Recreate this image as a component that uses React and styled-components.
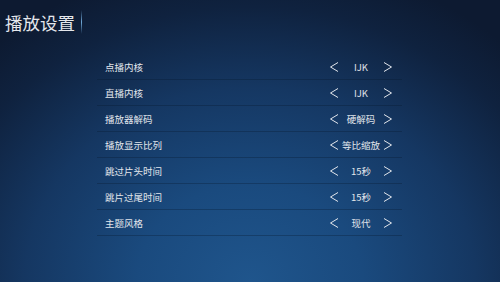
import React from 'react';
import styled, { createGlobalStyle } from 'styled-components';

const GlobalStyle = createGlobalStyle`
    html, body {
        margin: 0;
        padding: 0;
    }
    body {
        font-family: "Noto Sans CJK SC", "Roboto", sans-serif;
    }
`;

const settings = [
    { label: '点播内核', value: 'IJK' },
    { label: '直播内核', value: 'IJK' },
    { label: '播放器解码', value: '硬解码' },
    { label: '播放显示比列', value: '等比缩放' },
    { label: '跳过片头时间', value: '15秒' },
    { label: '跳片过尾时间', value: '15秒' },
    { label: '主题风格', value: '现代' },
];

const Arrow = ({ dir }) => (
    <ArrowIcon width="10" height="12" viewBox="0 0 10 12">
        {dir === 'left'
            ? <polyline points="9,1.5 1.5,6 9,10.5" />
            : <polyline points="1,1.5 8.5,6 1,10.5" />}
    </ArrowIcon>
);

const App = () => (
    <>
        <GlobalStyle />
        <Page>
            <Header>
                <Title>播放设置</Title>
                <Cursor />
            </Header>
            <List>
                {settings.map((item) => (
                    <Row key={item.label}>
                        <Label>{item.label}</Label>
                        <Picker>
                            <Arrow dir="left" />
                            <Value>{item.value}</Value>
                            <Arrow dir="right" />
                        </Picker>
                    </Row>
                ))}
            </List>
        </Page>
    </>
);

export default App;

const Page = styled.div`
    width: 500px;
    height: 282px;
    overflow: hidden;
    background: radial-gradient(ellipse 75% 115% at 50% 100%, #1f558c 0%, #1a4a7e 30%, #153762 60%, #0f223f 85%, #0d1a31 100%);
`;

const Header = styled.div`
    display: flex;
    align-items: center;
    height: 44px;
    padding-left: 5px;
`;

const Title = styled.h1`
    margin: 0;
    font-size: 17.5px;
    font-weight: 400;
    color: #e4e7ec;
`;

const Cursor = styled.div`
    width: 1px;
    height: 24px;
    margin-left: 6px;
    background: linear-gradient(to bottom, rgba(90, 150, 200, 0), #6fa8d8 50%, rgba(90, 150, 200, 0));
`;

const List = styled.div`
    width: 305px;
    margin: 10px 0 0 97px;
    display: flex;
    flex-direction: column;
`;

const Row = styled.div`
    display: flex;
    align-items: center;
    justify-content: space-between;
    height: 25px;
    padding: 0 9px 0 8px;
    border-bottom: 1px solid rgba(8, 22, 44, 0.3);
`;

const Label = styled.span`
    font-size: 9.5px;
    color: #e2e6ec;
`;

const Picker = styled.div`
    display: flex;
    align-items: center;
`;

const Value = styled.span`
    width: 44px;
    text-align: center;
    font-size: 9.5px;
    font-weight: 400;
    color: #e2e6ec;
`;

const ArrowIcon = styled.svg`
    display: block;
    fill: none;
    stroke: #e2e6ec;
    stroke-width: 1;
`;
